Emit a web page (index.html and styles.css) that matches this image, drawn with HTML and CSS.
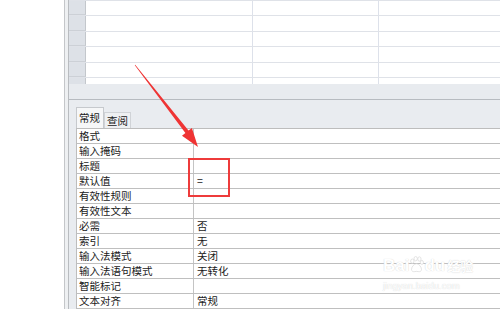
FILE: index.html
```html
<!DOCTYPE html>
<html lang="zh-CN">
<head>
    <meta charset="UTF-8">
    <title>字段属性</title>
    <link rel="stylesheet" href="styles.css">
</head>
<body>
<div class="frame">
    <div class="inner">
        <!-- 数据表网格 -->
        <div class="sheet">
            <div class="row"><div class="head"></div><div class="cell"></div><div class="cell"></div><div class="cell last"></div></div>
            <div class="row"><div class="head"></div><div class="cell"></div><div class="cell"></div><div class="cell last"></div></div>
            <div class="row"><div class="head"></div><div class="cell"></div><div class="cell"></div><div class="cell last"></div></div>
            <div class="row"><div class="head"></div><div class="cell"></div><div class="cell"></div><div class="cell last"></div></div>
            <div class="row"><div class="head"></div><div class="cell"></div><div class="cell"></div><div class="cell last"></div></div>
            <div class="row"><div class="head"></div><div class="cell"></div><div class="cell"></div><div class="cell last"></div></div>
        </div>
        <div class="band"></div>
        <!-- 字段属性 -->
        <div class="props">
            <div class="tabs">
                <span class="tab on">常规</span>
                <span class="tab">查阅</span>
            </div>
            <div class="list">
                <div class="prop"><span class="k">格式</span><span class="v"></span></div>
                <div class="prop"><span class="k">输入掩码</span><span class="v"></span></div>
                <div class="prop"><span class="k">标题</span><span class="v"></span></div>
                <div class="prop"><span class="k">默认值</span><span class="v">=</span></div>
                <div class="prop"><span class="k">有效性规则</span><span class="v"></span></div>
                <div class="prop"><span class="k">有效性文本</span><span class="v"></span></div>
                <div class="prop"><span class="k">必需</span><span class="v">否</span></div>
                <div class="prop"><span class="k">索引</span><span class="v">无</span></div>
                <div class="prop"><span class="k">输入法模式</span><span class="v">关闭</span></div>
                <div class="prop"><span class="k">输入法语句模式</span><span class="v">无转化</span></div>
                <div class="prop"><span class="k">智能标记</span><span class="v"></span></div>
                <div class="prop"><span class="k">文本对齐</span><span class="v">常规</span></div>
            </div>
        </div>
    </div>
</div>

<div class="mark-box"></div>
<svg class="arrow" width="500" height="309" viewBox="0 0 500 309">
    <polygon fill="#ef3434" points="134.8,65.2 185.4,133 182,135.7 198,147 191.9,128 188.5,130.6 135.2,64.8"/>
</svg>

<div class="watermark">
    <div class="wm-top">Bai<svg class="paw" width="15" height="17" viewBox="0 0 18 20"><g fill="#fff" stroke="#d6d6d6" stroke-width="0.8"><ellipse cx="4" cy="6" rx="2" ry="2.6"/><ellipse cx="8" cy="3" rx="2" ry="2.6"/><ellipse cx="12.5" cy="3.4" rx="2" ry="2.6"/><ellipse cx="15.5" cy="7.5" rx="1.8" ry="2.4"/><path d="M9 9c-3 0-6 4-6 7 0 2 2 3 4 2.5 1-.3 3-.3 4 0 2 .5 4-.5 4-2.5 0-3-3-7-6-7z"/></g></svg>du<span class="wm-cn">经验</span></div>
    <div class="wm-url">jingyan.baidu.com</div>
</div>
</body>
</html>
```

FILE: styles.css
```css
*{
    margin: 0px;
    padding: 0px;
    box-sizing: border-box;
}
body{
    width: 500px;
    height: 309px;
    overflow: hidden;
    background: #fff;
    font-family: "Noto Sans CJK SC", "Liberation Sans", sans-serif;
    font-size: 10.5px;
    color: #1a1a1a;
    position: relative;
}
.frame{
    margin-left: 64px;
    height: 309px;
    border-left: 1px solid #c4c6c9;
    padding-left: 3px;
    background: #eef0f2;
}
.inner{
    height: 309px;
    border-left: 1px solid #b9bcc0;
    background: #e9ecf0;
    display: flex;
    flex-direction: column;
}
.sheet{
    height: 84px;
    overflow: hidden;
    background: #fff;
    border-top: 1px solid #dfe2e8;
}
.row{
    display: flex;
    height: 15.4px;
    border-bottom: 1px solid #dfe2e8;
}
.head{
    width: 17px;
    background: #dde1e7;
    border-right: 1px solid #c3c7cc;
    border-bottom: 1px solid #ccd0d6;
}
.cell{
    width: 167px;
    border-right: 1px solid #dde1ea;
}
.cell:nth-child(3){
    width: 126px;
}
.cell.last{
    flex: 1;
    border-right: none;
}
.band{
    height: 16px;
    background: #e8ebef;
    border-bottom: 1px solid #b7bbc0;
}
.props{
    flex: 1;
    padding: 7px 0 0 7px;
    background: #e9ecf0;
}
.tabs{
    display: flex;
    align-items: flex-end;
    height: 21px;
}
.tab{
    height: 16px;
    line-height: 15px;
    padding: 0 2px 0 2px;
    border: 1px solid #d0d3d7;
    border-bottom: none;
    background: #eef0f2;
}
.tab.on{
    width: 28px;
    height: 21px;
    line-height: 20px;
    background: #f6f7f8;
    border-color: #c6c9cd;
}
.list{
    background: #fff;
    border-top: 1px solid #bdbdbd;
    border-left: 1px solid #bdbdbd;
}
.prop{
    display: flex;
    height: 15px;
    line-height: 14px;
    border-bottom: 1px solid #bfbfbf;
}
.k{
    width: 117px;
    padding-left: 2px;
    border-right: 1px solid #c4c4c4;
}
.v{
    flex: 1;
    padding-left: 3px;
}
.mark-box{
    position: absolute;
    left: 188px;
    top: 158px;
    width: 42px;
    height: 39px;
    border: 2px solid #ee3b3b;
}
.arrow{
    position: absolute;
    left: 0;
    top: 0;
}
.watermark{
    position: absolute;
    left: 383px;
    top: 256px;
    white-space: nowrap;
    color: #fff;
    text-shadow: 0 0 1px #c8c8c8;
}
.wm-top{
    display: flex;
    align-items: flex-end;
    font-family: "Liberation Sans", sans-serif;
    font-weight: bold;
    font-size: 17px;
    line-height: 20px;
}
.paw{
    margin: 0 0 3px 0;
}
.wm-cn{
    font-family: "Noto Sans CJK SC", sans-serif;
    font-size: 13px;
    margin-left: 2px;
}
.wm-url{
    font-family: "Liberation Sans", sans-serif;
    font-size: 9.5px;
    margin-top: 4px;
}
```
